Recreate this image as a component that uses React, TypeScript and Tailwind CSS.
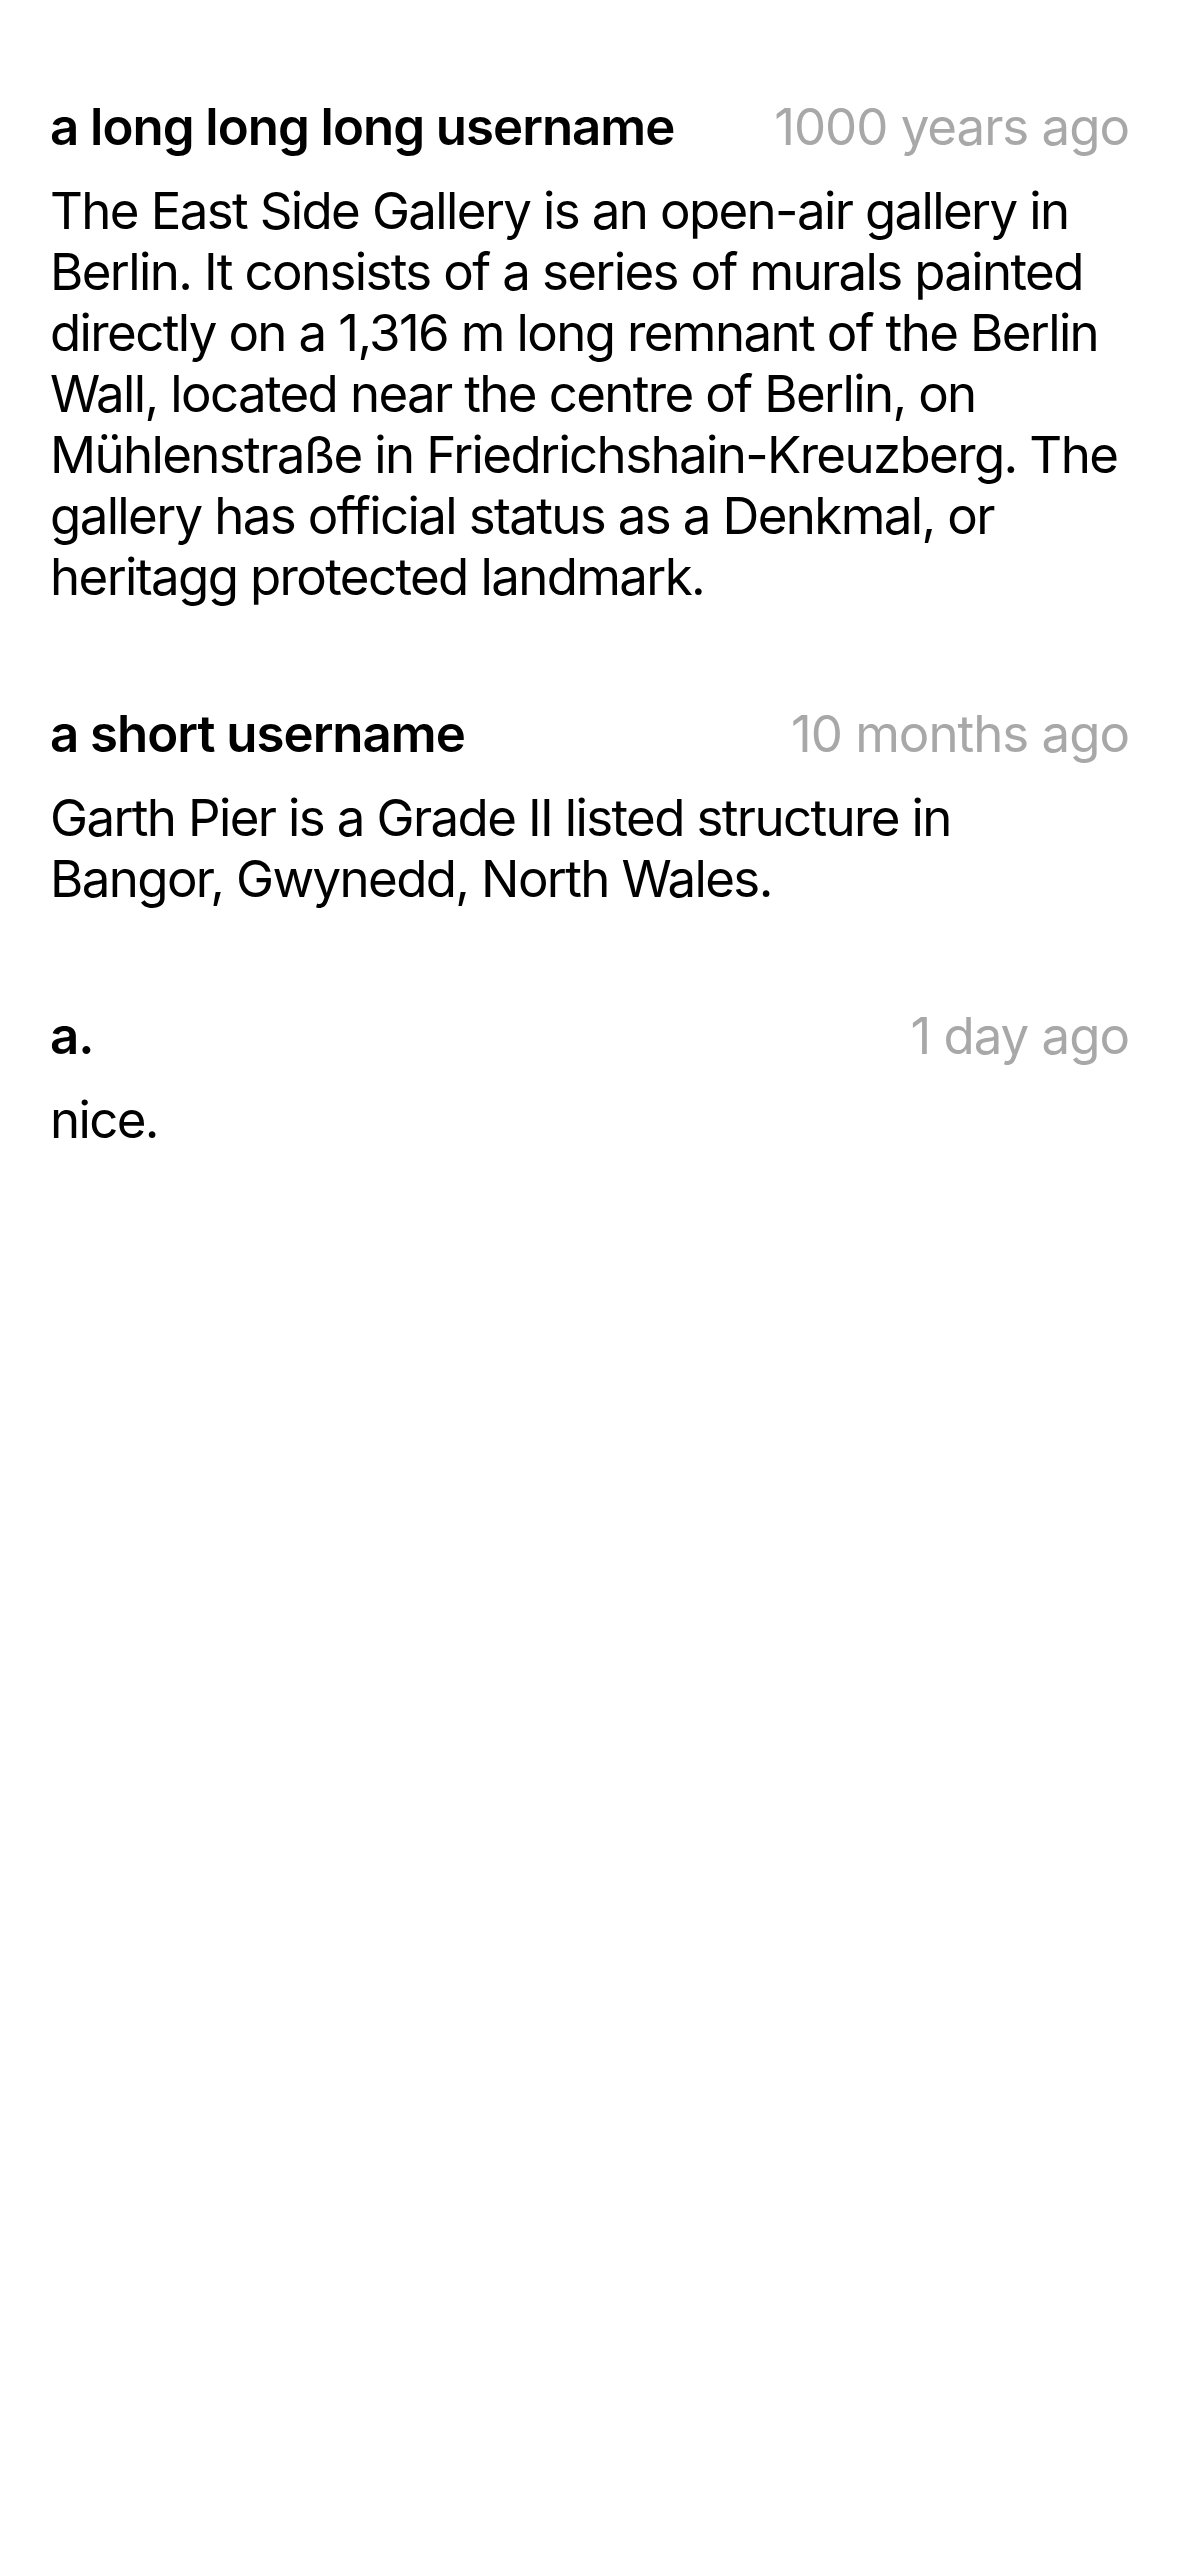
import React from "react";

interface Comment {
  id: number;
  username: string;
  time: string;
  text: string;
}

const comments: Comment[] = [
  {
    id: 1,
    username: "a long long long username",
    time: "1000 years ago",
    text: "The East Side Gallery is an open-air gallery in Berlin. It consists of a series of murals painted directly on a 1,316 m long remnant of the Berlin Wall, located near the centre of Berlin, on Mühlenstraße in Friedrichshain-Kreuzberg. The gallery has official status as a Denkmal, or heritagg protected landmark.",
  },
  {
    id: 2,
    username: "a short username",
    time: "10 months ago",
    text: "Garth Pier is a Grade II listed structure in Bangor, Gwynedd, North Wales.",
  },
  {
    id: 3,
    username: "a.",
    time: "1 day ago",
    text: "nice.",
  },
];

const CommentItem: React.FC<{ comment: Comment }> = ({ comment }) => {
  return (
    <div className="flex flex-col">
      <div className="flex items-center justify-between gap-4 mb-[23px]">
        <span className="text-[51px] leading-[61px] font-semibold text-black tracking-[-0.02em] truncate">
          {comment.username}
        </span>
        <span className="text-[51px] leading-[61px] text-[#a8a8a8] tracking-[-0.02em] whitespace-nowrap">
          {comment.time}
        </span>
      </div>
      <p className="text-[51px] leading-[61px] text-black tracking-[-0.032em]">{comment.text}</p>
    </div>
  );
};

export default function App() {
  return (
    <div
      className="min-h-[2556px] w-full bg-white"
      style={{ fontFamily: "Inter, 'Noto Sans', sans-serif" }}
    >
      <div className="flex flex-col gap-[96px] px-[50px] pt-[96px]">
        {comments.map((c) => (
          <CommentItem key={c.id} comment={c} />
        ))}
      </div>
    </div>
  );
}
